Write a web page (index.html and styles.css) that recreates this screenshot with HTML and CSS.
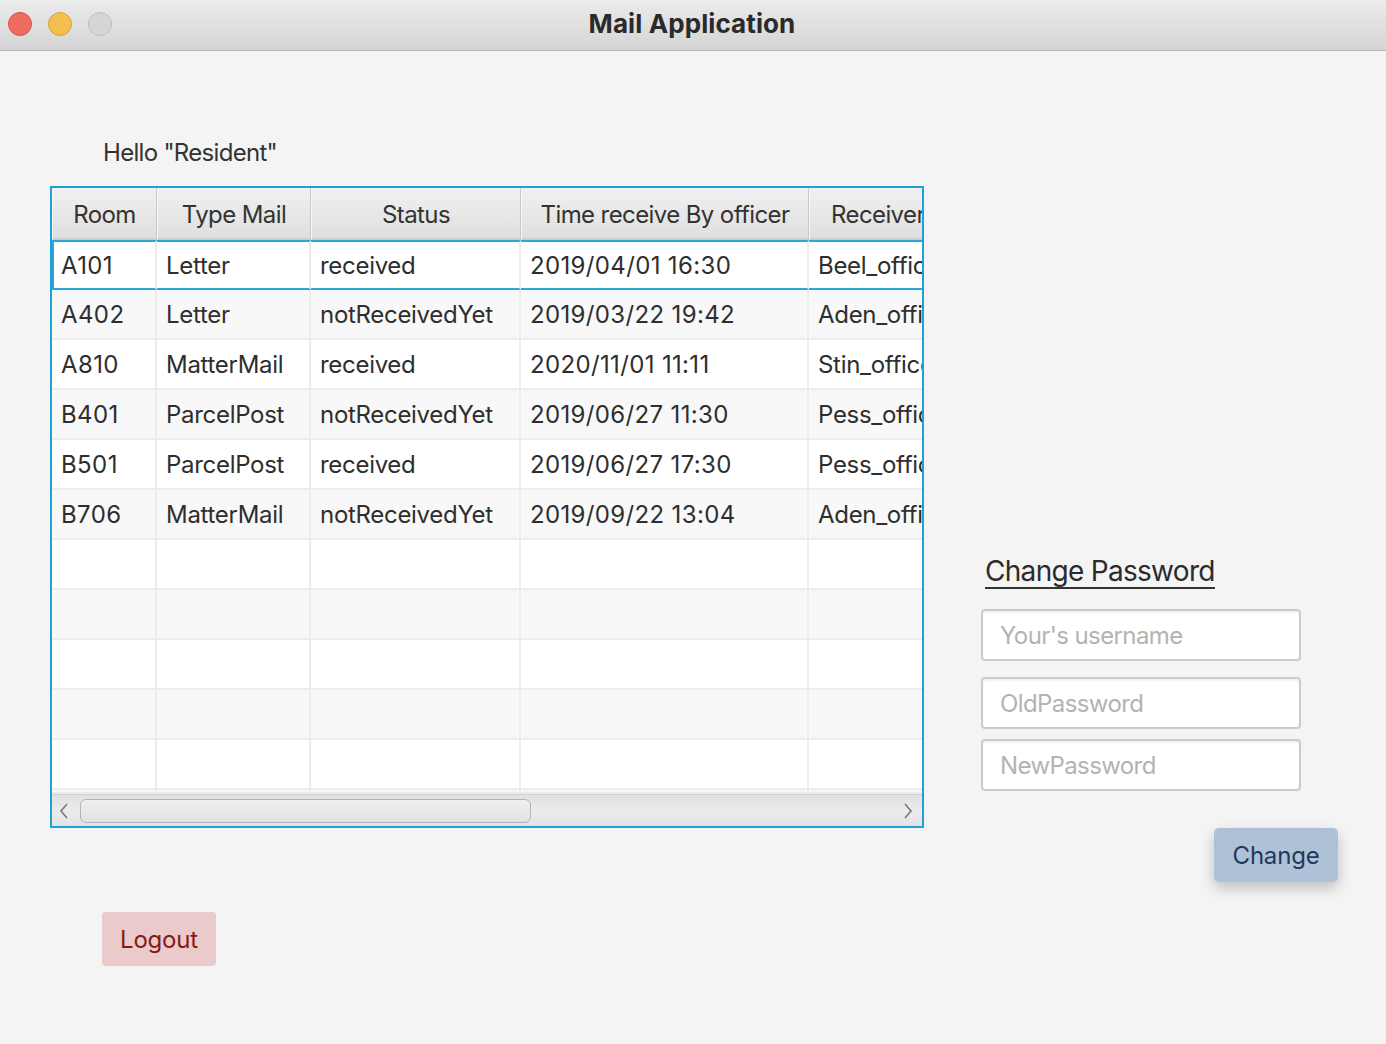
FILE: index.html
```html
<!DOCTYPE html>
<html>
<head>
<meta charset="utf-8">
<link rel="stylesheet" href="styles.css">
</head>
<body>
<div class="titlebar">
  <div class="lights">
    <span class="light red"></span>
    <span class="light yellow"></span>
    <span class="light gray"></span>
  </div>
  <div class="title">Mail Application</div>
</div>
<div class="main">
  <div class="left">
    <div class="hello">Hello "Resident"</div>
    <div class="table">
      <div class="grid">
        <div class="hcell">Room</div>
        <div class="hcell">Type Mail</div>
        <div class="hcell">Status</div>
        <div class="hcell">Time receive By officer</div>
        <div class="hcell hleft">Receiver</div>

        <div class="row sel">
          <div class="cell room">A101</div><div class="cell">Letter</div><div class="cell">received</div><div class="cell time">2019/04/01 16:30</div><div class="cell">Beel_officer</div>
        </div>
        <div class="row odd">
          <div class="cell room">A402</div><div class="cell">Letter</div><div class="cell">notReceivedYet</div><div class="cell time">2019/03/22 19:42</div><div class="cell">Aden_officer</div>
        </div>
        <div class="row">
          <div class="cell room">A810</div><div class="cell">MatterMail</div><div class="cell">received</div><div class="cell time">2020/11/01 11:11</div><div class="cell">Stin_officer</div>
        </div>
        <div class="row odd">
          <div class="cell room">B401</div><div class="cell">ParcelPost</div><div class="cell">notReceivedYet</div><div class="cell time">2019/06/27 11:30</div><div class="cell">Pess_officer</div>
        </div>
        <div class="row">
          <div class="cell room">B501</div><div class="cell">ParcelPost</div><div class="cell">received</div><div class="cell time">2019/06/27 17:30</div><div class="cell">Pess_officer</div>
        </div>
        <div class="row odd">
          <div class="cell room">B706</div><div class="cell">MatterMail</div><div class="cell">notReceivedYet</div><div class="cell time">2019/09/22 13:04</div><div class="cell">Aden_officer</div>
        </div>
        <div class="row"><div class="cell"></div><div class="cell"></div><div class="cell"></div><div class="cell"></div><div class="cell"></div></div>
        <div class="row odd"><div class="cell"></div><div class="cell"></div><div class="cell"></div><div class="cell"></div><div class="cell"></div></div>
        <div class="row"><div class="cell"></div><div class="cell"></div><div class="cell"></div><div class="cell"></div><div class="cell"></div></div>
        <div class="row odd"><div class="cell"></div><div class="cell"></div><div class="cell"></div><div class="cell"></div><div class="cell"></div></div>
        <div class="row"><div class="cell"></div><div class="cell"></div><div class="cell"></div><div class="cell"></div><div class="cell"></div></div>
        <div class="row odd short"><div class="cell"></div><div class="cell"></div><div class="cell"></div><div class="cell"></div><div class="cell"></div></div>
      </div>
      <div class="scrollbar">
        <svg class="arrow" width="12" height="18" viewBox="0 0 12 18"><path d="M9 2 L3 9 L9 16" fill="none" stroke="#777" stroke-width="1.6"/></svg>
        <div class="track"><div class="thumb"></div></div>
        <svg class="arrow" width="12" height="18" viewBox="0 0 12 18"><path d="M3 2 L9 9 L3 16" fill="none" stroke="#777" stroke-width="1.6"/></svg>
      </div>
    </div>
    <button class="logout">Logout</button>
  </div>
  <div class="right">
    <div class="cp-title">Change Password</div>
    <div class="field first">Your's username</div>
    <div class="field second">OldPassword</div>
    <div class="field third">NewPassword</div>
    <div class="btn-row"><button class="change">Change</button></div>
  </div>
</div>
</body>
</html>
```
FILE: styles.css
```css
* { box-sizing: border-box; }
html, body { margin: 0; padding: 0; }
body {
  width: 1386px;
  height: 1044px;
  background: #f4f4f4;
  font-family: Inter, "Noto Sans", sans-serif;
  color: #333;
  overflow: hidden;
}
.titlebar {
  height: 51px;
  background: linear-gradient(#ebebeb, #d5d5d5);
  border-bottom: 1px solid #b5b5b5;
  display: flex;
  align-items: center;
  justify-content: center;
  position: relative;
}
.lights {
  position: absolute;
  left: 8px;
  top: 12px;
  display: flex;
  gap: 16px;
}
.light {
  width: 24px;
  height: 24px;
  border-radius: 50%;
  display: block;
}
.red { background: #ee6b60; border: 1px solid #d5524a; }
.yellow { background: #f5bf4f; border: 1px solid #d9a13c; }
.gray { background: #d6d6d6; border: 1px solid #bdbdbd; }
.title {
  font-size: 26px;
  font-weight: 700;
  color: #2a2a2a;
  margin-left: -2px;
  margin-top: -4px;
  letter-spacing: 0.1px;
}
.main {
  display: flex;
  align-items: flex-start;
}
.left {
  padding-left: 50px;
  width: 981px;
}
.hello {
  margin-top: 87px;
  padding-left: 53px;
  font-size: 24px;
  line-height: 30px;
  height: 30px;
  color: #333;
  letter-spacing: -0.7px;
}
.table {
  margin-top: 18px;
  width: 874px;
  height: 642px;
  border: 2px solid #1fa0d8;
  background: #fff;
  overflow: hidden;
  display: flex;
  flex-direction: column;
}
.grid {
  display: grid;
  grid-template-columns: 105px 154px 210px 288px 170px;
  height: 606px;
  overflow: hidden;
  width: 870px;
  flex: none;
}
.hcell {
  height: 52px;
  background: linear-gradient(#f1f1f1, #dfdfdf);
  border-right: 1px solid #c9c9c9;
  border-left: 1px solid #f7f7f7;
  border-bottom: 2px solid #cfcfcf;
  display: flex;
  align-items: center;
  justify-content: center;
  padding-top: 3px;
  font-size: 24px;
  color: #333;
  white-space: nowrap;
  letter-spacing: -0.6px;
}
.hcell.hleft { justify-content: flex-start; padding-left: 21px; }
.row {
  display: contents;
}
.cell {
  height: 50px;
  border-right: 2px solid #ececec;
  border-bottom: 2px solid #ececec;
  background: #fff;
  display: flex;
  align-items: center;
  padding-left: 9px;
  padding-top: 1px;
  font-size: 24px;
  color: #2e2e2e;
  white-space: nowrap;
  letter-spacing: -0.3px;
  overflow: hidden;
}
.cell.time { letter-spacing: 0.35px; }
.cell.room { letter-spacing: 0.4px; }
.row.odd .cell { background: #f8f8f8; }
.row.sel .cell {
  border-top: 2px solid #2ba6da;
  border-bottom: 2px solid #2ba6da;
  height: 50px;
  padding-top: 0;
}
.row.sel .cell:first-child { border-left: 2px solid #2ba6da; padding-left: 7px; }
.row.short .cell { height: 4px; }
.scrollbar {
  flex: none;
  height: 32px;
  background: linear-gradient(#e0e0e0, #ececec 50%, #e3e3e3);
  border-top: 1px solid #d2d2d2;
  display: flex;
  align-items: center;
  padding: 0 8px 0 6px;
}
.arrow { flex: none; }
.track {
  flex: 1;
  height: 24px;
  padding: 0 8px 0 10px;
  display: flex;
  align-items: center;
}
.thumb {
  width: 451px;
  height: 24px;
  border: 1px solid #b3b3b3;
  border-radius: 6px;
  background: linear-gradient(#efefef, #e2e2e2);
}
.logout {
  margin-top: 84px;
  margin-left: 52px;
  width: 114px;
  height: 54px;
  border: none;
  border-radius: 4px;
  background: #eacaca;
  color: #8a1717;
  font-family: Inter, "Noto Sans", sans-serif;
  font-size: 24px;
  padding: 0;
  letter-spacing: -0.2px;
}
.right {
  display: flex;
  flex-direction: column;
  padding-top: 504px;
  width: 405px;
}
.cp-title {
  font-size: 28px;
  color: #2b2b2b;
  line-height: 32px;
  margin-left: 4px;
  padding-bottom: 0px;
  border-bottom: 2px solid #333;
  width: fit-content;
  letter-spacing: -0.7px;
}
.field {
  width: 320px;
  height: 52px;
  background: #fff;
  border: 2px solid #cbcbcb;
  border-radius: 4px;
  box-shadow: inset 0 2px 2px rgba(0,0,0,0.06);
  display: flex;
  align-items: center;
  padding-left: 17px;
  font-size: 24px;
  color: #b3b3b3;
  letter-spacing: -0.6px;
}
.field.first { margin-top: 20px; }
.field.second { margin-top: 16px; }
.field.third { margin-top: 10px; }
.btn-row {
  margin-top: 37px;
  padding-left: 233px;
}
.change {
  width: 124px;
  height: 54px;
  border: none;
  border-radius: 5px;
  background: #afc1d6;
  color: #1b3a5e;
  font-family: Inter, "Noto Sans", sans-serif;
  font-size: 24px;
  padding: 0;
  box-shadow: 0 6px 14px rgba(0,0,0,0.22);
  letter-spacing: -0.2px;
}
```
